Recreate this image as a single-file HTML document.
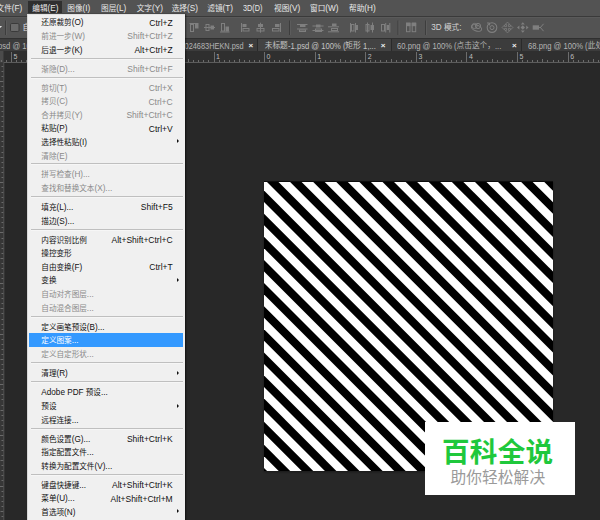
<!DOCTYPE html><html lang="zh-CN"><head><meta charset="utf-8"><title>Photoshop</title><style>
html,body{margin:0;padding:0}
body{width:600px;height:520px;overflow:hidden;background:#282828;position:relative;font-family:"Liberation Sans","Noto Sans CJK SC",sans-serif;}
div,span{position:absolute;white-space:nowrap;box-sizing:border-box}
svg{position:absolute;overflow:visible}
.l,#menubar span.l{position:static;font-size:8.2px}
#menubar{left:0;top:0;width:600px;height:16px;background:#535353}
#menubar span{top:1.8px;height:13px;line-height:13px;font-size:7.65px;color:#e8e8e8}
#mbline{left:0;top:16px;width:600px;height:2px;background:#5a5a5a;border-top:1px solid #3a3a3a}
#optbar{left:0;top:18px;width:600px;height:20px;background:#535353}
#tabbar{left:0;top:38px;width:600px;height:13px;background:#3c3c3c;border-top:1px solid #303030}
#tabbar span{top:1px;height:12px;line-height:12px;font-size:7.9px;color:#b4b4b4}
#tabbar i{position:absolute;top:0;width:1px;height:12px;background:#2a2a2a}
#tabbar b{position:absolute;top:1px;height:12px;line-height:12px;font-size:8px;color:#f0f0f0;font-weight:bold}
#ruler{left:0;top:51px;width:600px;height:12px;background:#2f2f2f}
#vruler{left:0;top:63px;width:4px;height:457px;background:#373737}
#menu{left:27px;top:13.6px;width:158px;height:512px;background:#f0f0f0;border-left:1px solid #d8d8d8;border-top:1px solid #e2e2e2;box-shadow:1px 0 1.5px rgba(0,0,0,.55)}
.mi{left:1px;width:154px;height:13.6px;line-height:13.6px;font-size:7.6px;color:#101010}
.mi .t{left:12.3px;top:0.85px}
.mi .k{right:10.3px;top:1.3px;font-size:8.5px}
.mi.d{color:#8a8a8a}
.mi.h{background:#3399ff;color:#fff}
.mi .ar{right:3.6px;top:4.4px;width:0;height:0;border-left:2.8px solid #111;border-top:2.4px solid transparent;border-bottom:2.4px solid transparent}
.sep{left:2.5px;width:152.5px;height:1px;background:#bfbfbf;box-shadow:0 1px 0 #f6f6f6}
#wm{left:425px;top:422px;width:150px;height:73px;background:#fff}
#wm .a{left:-2.3px;width:150px;text-align:center;top:14.8px;font-size:27.6px;line-height:32px;font-weight:bold;color:#1fc83c;letter-spacing:0.3px}
#wm .b{left:-2.2px;width:150px;text-align:center;top:46.3px;font-size:15.7px;line-height:20px;color:#9a9a9a;letter-spacing:0.12px}
</style></head><body>
<div id="menubar"><div style="left:27.5px;top:1px;width:34.5px;height:12.3px;background:#2f2f2f"></div><span style="left:-3.5px">文件<span class="l">(F)</span></span><span style="left:32.3px">编辑<span class="l">(E)</span></span><span style="left:67.3px">图像<span class="l">(I)</span></span><span style="left:101px">图层<span class="l">(L)</span></span><span style="left:136.7px">文字<span class="l">(Y)</span></span><span style="left:171.7px">选择<span class="l">(S)</span></span><span style="left:207.3px">滤镜<span class="l">(T)</span></span><span style="left:242.7px;font-size:8.2px;transform:scaleX(0.89);transform-origin:0 50%">3D(D)</span><span style="left:274px">视图<span class="l">(V)</span></span><span style="left:310px">窗口<span class="l">(W)</span></span><span style="left:349px">帮助<span class="l">(H)</span></span></div><div id="mbline"></div>
<div id="optbar"></div><svg style="left:0;top:0" width="600" height="40" viewBox="0 0 600 40" shape-rendering="auto"><path d="M-1 26 L2 26 L0.5 28 Z" fill="#ddd"/><rect x="5" y="20.5" width="1" height="14.5" fill="#3d3d3d"/><rect x="6" y="20.5" width="1" height="14.5" fill="#5c5c5c"/><rect x="10.5" y="23.5" width="8.5" height="8" rx="1.2" fill="#6a6a6a" stroke="#3a3a3a" stroke-width="1"/><rect x="189.5" y="23" width="9.0" height="1" fill="#7f7f7f"/><rect x="190.5" y="24.5" width="3" height="7" fill="none" stroke="#7f7f7f" stroke-width="1"/><rect x="195" y="24" width="3.5" height="4.5" fill="#7f7f7f"/><rect x="204" y="27" width="11" height="1" fill="#7f7f7f"/><rect x="206.0" y="24.5" width="3" height="6" fill="none" stroke="#7f7f7f" stroke-width="1"/><rect x="210.5" y="25.5" width="3.5" height="4" fill="#7f7f7f"/><rect x="220" y="31.5" width="9.5" height="1" fill="#7f7f7f"/><rect x="221.5" y="23.5" width="3" height="7.5" fill="none" stroke="#7f7f7f" stroke-width="1"/><rect x="225.5" y="26.5" width="3.5" height="5" fill="#7f7f7f"/><rect x="241" y="23" width="1" height="9" fill="#7f7f7f"/><rect x="242.5" y="24" width="4" height="3" fill="#7f7f7f"/><rect x="243.0" y="28.5" width="6" height="2.5" fill="none" stroke="#7f7f7f" stroke-width="1"/><rect x="260" y="22.7" width="1" height="10.000000000000004" fill="#7f7f7f"/><rect x="258" y="24" width="5" height="3" fill="#7f7f7f"/><rect x="257.0" y="28.5" width="7" height="2.5" fill="none" stroke="#7f7f7f" stroke-width="1"/><rect x="280" y="23" width="1" height="9" fill="#7f7f7f"/><rect x="275" y="24" width="4.5" height="3" fill="#7f7f7f"/><rect x="272.5" y="28.5" width="6.5" height="2.5" fill="none" stroke="#7f7f7f" stroke-width="1"/><rect x="289" y="20.5" width="1" height="14.5" fill="#3d3d3d"/><rect x="290" y="20.5" width="1" height="14.5" fill="#5c5c5c"/><rect x="297" y="24" width="10.5" height="1" fill="#7f7f7f"/><rect x="300" y="25" width="5.5" height="2" fill="#7f7f7f"/><rect x="297" y="28.5" width="10.5" height="1" fill="#7f7f7f"/><rect x="299.5" y="30.0" width="6" height="1.5" fill="none" stroke="#7f7f7f" stroke-width="1"/><rect x="312.5" y="25.5" width="11.0" height="1" fill="#7f7f7f"/><rect x="316" y="24.5" width="4.5" height="3" fill="#7f7f7f"/><rect x="312.5" y="30" width="11.0" height="1" fill="#7f7f7f"/><rect x="315.5" y="29.0" width="6" height="2.5" fill="none" stroke="#7f7f7f" stroke-width="1"/><rect x="332" y="23.5" width="4.5" height="2.5" fill="#7f7f7f"/><rect x="328" y="26.3" width="11" height="1" fill="#7f7f7f"/><rect x="331.5" y="28.5" width="6" height="2" fill="none" stroke="#7f7f7f" stroke-width="1"/><rect x="328" y="31.3" width="11" height="1" fill="#7f7f7f"/><rect x="350" y="23" width="1" height="9.5" fill="#7f7f7f"/><rect x="351.5" y="24.5" width="2.5" height="6.5" fill="none" stroke="#7f7f7f" stroke-width="1"/><rect x="355" y="23" width="1" height="9.5" fill="#7f7f7f"/><rect x="356" y="25" width="2" height="5" fill="#7f7f7f"/><rect x="367" y="22.5" width="1" height="10.0" fill="#7f7f7f"/><rect x="366.0" y="24.5" width="3" height="6.5" fill="none" stroke="#7f7f7f" stroke-width="1"/><rect x="372" y="22.5" width="1" height="10.0" fill="#7f7f7f"/><rect x="370.5" y="25" width="3.5" height="5" fill="#7f7f7f"/><rect x="381.5" y="24.5" width="3" height="6.5" fill="none" stroke="#7f7f7f" stroke-width="1"/><rect x="385.2" y="23" width="1" height="9.5" fill="#7f7f7f"/><rect x="386.7" y="25" width="2.3" height="5" fill="#7f7f7f"/><rect x="389.3" y="23" width="1" height="9.5" fill="#7f7f7f"/><rect x="397.5" y="20.5" width="1" height="14.5" fill="#3d3d3d"/><rect x="398.5" y="20.5" width="1" height="14.5" fill="#5c5c5c"/><rect x="406.5" y="23.2" width="3.5" height="8.5" fill="none" stroke="#7f7f7f" stroke-width="1"/><rect x="406" y="22.7" width="4.5" height="3.5" fill="#7f7f7f"/><rect x="412.2" y="23.2" width="3.5" height="8.5" fill="none" stroke="#7f7f7f" stroke-width="1"/><rect x="411.7" y="22.7" width="4.5" height="3.5" fill="#7f7f7f"/><rect x="425" y="20.5" width="1" height="14.5" fill="#3d3d3d"/><rect x="426" y="20.5" width="1" height="14.5" fill="#5c5c5c"/><circle cx="478" cy="26" r="2.6" fill="none" stroke="#7f7f7f" stroke-width="1"/><ellipse cx="476.5" cy="28" rx="5.3" ry="3" fill="none" stroke="#7f7f7f" stroke-width="1" transform="rotate(20 476.5 28)"/><circle cx="474.5" cy="26" r="2.6" fill="none" stroke="#7f7f7f" stroke-width="0.9"/><circle cx="492" cy="27.6" r="4.8" fill="none" stroke="#7f7f7f" stroke-width="1.1"/><circle cx="492" cy="27.6" r="2" fill="none" stroke="#7f7f7f" stroke-width="1"/><path d="M487 23 l2.6 0 l0 2.4" fill="none" stroke="#7f7f7f" stroke-width="1"/><polygon points="507.50,22.10 510.00,24.60 508.40,24.60 508.40,26.60 510.40,26.60 510.40,25.00 512.90,27.50 510.40,30.00 510.40,28.40 508.40,28.40 508.40,30.40 510.00,30.40 507.50,32.90 505.00,30.40 506.60,30.40 506.60,28.40 504.60,28.40 504.60,30.00 502.10,27.50 504.60,25.00 504.60,26.60 506.60,26.60 506.60,24.60 505.00,24.60" fill="none" stroke="#7f7f7f" stroke-width="0.8"/><path d="M522.8 25.3 l2.2 2.2 l-2.2 2.2 l-2.2 -2.2 z" fill="#7f7f7f"/><path d="M522.8 22.2 l2 2.3 h-4 z M522.8 32.8 l2 -2.3 h-4 z M517.0 27.5 l2.4 -2 v4 z M528.5999999999999 27.5 l-2.4 -2 v4 z" fill="#7f7f7f"/><rect x="532.7" y="25.3" width="6.3" height="4.4" fill="#7f7f7f"/><path d="M543.6 23.8 L540.4 27.5 L543.6 31.2" fill="none" stroke="#7f7f7f" stroke-width="1"/><path d="M539 27.5 h2" stroke="#7f7f7f" stroke-width="1"/></svg><span style="left:22.6px;top:21.5px;height:12px;line-height:12px;font-size:7.65px;color:#e0e0e0">自动选择<span class="l">:</span></span><span style="left:431.3px;top:21.5px;height:12px;line-height:12px;font-size:7.65px;color:#d4d4d4"><span class="l">3D</span> 模式<span class="l">:</span></span>
<div id="tabbar"><span style="left:-1.80px;top:1.0px;height:12px;line-height:12px;font-size:8.7px;color:#b4b4b4;white-space:pre;transform:scaleX(0.88);transform-origin:0 50%">psd @ 100% (</span><span style="left:46.83px;top:1px;height:12px;line-height:12px;font-size:7.7px;color:#b4b4b4;white-space:pre">图层</span><span style="left:62.23px;top:1.0px;height:12px;line-height:12px;font-size:8.7px;color:#b4b4b4;white-space:pre;transform:scaleX(0.88);transform-origin:0 50%"> 1, RGB/8)</span><span style="left:164.44px;top:1.0px;height:12px;line-height:12px;font-size:8.7px;color:#b4b4b4;white-space:pre;transform:scaleX(0.85);transform-origin:0 50%">20160024683HEKN.psd</span><b style="left:248.6px">×</b><i style="left:257px"></i><div style="left:258px;top:0;width:133px;height:12px;background:#434343"></div><span style="left:264.70px;top:1px;height:12px;line-height:12px;font-size:7.7px;color:#c4c4c4;white-space:pre">未标题</span><span style="left:287.80px;top:1.0px;height:12px;line-height:12px;font-size:8.7px;color:#c4c4c4;white-space:pre;transform:scaleX(0.88);transform-origin:0 50%">-1.psd @ 100% (</span><span style="left:345.36px;top:1px;height:12px;line-height:12px;font-size:7.7px;color:#c4c4c4;white-space:pre">矩形</span><span style="left:360.76px;top:1.0px;height:12px;line-height:12px;font-size:8.7px;color:#c4c4c4;white-space:pre;transform:scaleX(0.88);transform-origin:0 50%"> 1,...</span><b style="left:380.8px">×</b><i style="left:391px"></i><span style="left:396.80px;top:1.0px;height:12px;line-height:12px;font-size:8.7px;color:#b4b4b4;white-space:pre;transform:scaleX(0.88);transform-origin:0 50%">60.png @ 100% (</span><span style="left:456.50px;top:1px;height:12px;line-height:12px;font-size:7.7px;color:#b4b4b4;white-space:pre">点击这个，</span><span style="left:495.00px;top:1.0px;height:12px;line-height:12px;font-size:8.7px;color:#b4b4b4;white-space:pre;transform:scaleX(0.88);transform-origin:0 50%">...</span><b style="left:512px">×</b><i style="left:521px"></i><span style="left:528.00px;top:1.0px;height:12px;line-height:12px;font-size:8.7px;color:#b4b4b4;white-space:pre;transform:scaleX(0.88);transform-origin:0 50%">68.png @ 100% (</span><span style="left:587.70px;top:1px;height:12px;line-height:12px;font-size:7.7px;color:#b4b4b4;white-space:pre">此处添加文字</span><span style="left:633.90px;top:1.0px;height:12px;line-height:12px;font-size:8.7px;color:#b4b4b4;white-space:pre;transform:scaleX(0.88);transform-origin:0 50%">)</span></div>
<div id="ruler"></div><div id="vruler"></div><svg style="left:0;top:0" width="600" height="520" viewBox="0 0 600 520"><rect x="0" y="51" width="3.5" height="11.5" fill="#4b4b4b"/><rect x="-40" y="52" width="1" height="11" fill="#6c6c6c"/><text x="-37.00" y="59.2" font-size="7" fill="#bdbdbd" font-family='"Liberation Sans",sans-serif'>6</text><rect x="-34" y="60" width="1" height="2" fill="#6c6c6c"/><rect x="-29" y="60" width="1" height="2" fill="#6c6c6c"/><rect x="-24" y="60" width="1" height="2" fill="#6c6c6c"/><rect x="-19" y="60" width="1" height="2" fill="#6c6c6c"/><rect x="-14" y="59" width="1" height="3" fill="#6c6c6c"/><rect x="-9" y="60" width="1" height="2" fill="#6c6c6c"/><rect x="-4" y="60" width="1" height="2" fill="#6c6c6c"/><rect x="1" y="60" width="1" height="2" fill="#6c6c6c"/><rect x="6" y="60" width="1" height="2" fill="#6c6c6c"/><rect x="11" y="52" width="1" height="11" fill="#6c6c6c"/><text x="13.60" y="59.2" font-size="7" fill="#bdbdbd" font-family='"Liberation Sans",sans-serif'>5</text><rect x="16" y="60" width="1" height="2" fill="#6c6c6c"/><rect x="21" y="60" width="1" height="2" fill="#6c6c6c"/><rect x="26" y="60" width="1" height="2" fill="#6c6c6c"/><rect x="31" y="60" width="1" height="2" fill="#6c6c6c"/><rect x="36" y="59" width="1" height="3" fill="#6c6c6c"/><rect x="41" y="60" width="1" height="2" fill="#6c6c6c"/><rect x="47" y="60" width="1" height="2" fill="#6c6c6c"/><rect x="52" y="60" width="1" height="2" fill="#6c6c6c"/><rect x="57" y="60" width="1" height="2" fill="#6c6c6c"/><rect x="62" y="52" width="1" height="11" fill="#6c6c6c"/><text x="64.20" y="59.2" font-size="7" fill="#bdbdbd" font-family='"Liberation Sans",sans-serif'>4</text><rect x="67" y="60" width="1" height="2" fill="#6c6c6c"/><rect x="72" y="60" width="1" height="2" fill="#6c6c6c"/><rect x="77" y="60" width="1" height="2" fill="#6c6c6c"/><rect x="82" y="60" width="1" height="2" fill="#6c6c6c"/><rect x="87" y="59" width="1" height="3" fill="#6c6c6c"/><rect x="92" y="60" width="1" height="2" fill="#6c6c6c"/><rect x="97" y="60" width="1" height="2" fill="#6c6c6c"/><rect x="102" y="60" width="1" height="2" fill="#6c6c6c"/><rect x="107" y="60" width="1" height="2" fill="#6c6c6c"/><rect x="112" y="52" width="1" height="11" fill="#6c6c6c"/><text x="114.80" y="59.2" font-size="7" fill="#bdbdbd" font-family='"Liberation Sans",sans-serif'>3</text><rect x="117" y="60" width="1" height="2" fill="#6c6c6c"/><rect x="122" y="60" width="1" height="2" fill="#6c6c6c"/><rect x="127" y="60" width="1" height="2" fill="#6c6c6c"/><rect x="133" y="60" width="1" height="2" fill="#6c6c6c"/><rect x="138" y="59" width="1" height="3" fill="#6c6c6c"/><rect x="143" y="60" width="1" height="2" fill="#6c6c6c"/><rect x="148" y="60" width="1" height="2" fill="#6c6c6c"/><rect x="153" y="60" width="1" height="2" fill="#6c6c6c"/><rect x="158" y="60" width="1" height="2" fill="#6c6c6c"/><rect x="163" y="52" width="1" height="11" fill="#6c6c6c"/><text x="165.40" y="59.2" font-size="7" fill="#bdbdbd" font-family='"Liberation Sans",sans-serif'>2</text><rect x="168" y="60" width="1" height="2" fill="#6c6c6c"/><rect x="173" y="60" width="1" height="2" fill="#6c6c6c"/><rect x="178" y="60" width="1" height="2" fill="#6c6c6c"/><rect x="183" y="60" width="1" height="2" fill="#6c6c6c"/><rect x="188" y="59" width="1" height="3" fill="#6c6c6c"/><rect x="193" y="60" width="1" height="2" fill="#6c6c6c"/><rect x="198" y="60" width="1" height="2" fill="#6c6c6c"/><rect x="203" y="60" width="1" height="2" fill="#6c6c6c"/><rect x="208" y="60" width="1" height="2" fill="#6c6c6c"/><rect x="214" y="52" width="1" height="11" fill="#6c6c6c"/><text x="216.00" y="59.2" font-size="7" fill="#bdbdbd" font-family='"Liberation Sans",sans-serif'>1</text><rect x="219" y="60" width="1" height="2" fill="#6c6c6c"/><rect x="224" y="60" width="1" height="2" fill="#6c6c6c"/><rect x="229" y="60" width="1" height="2" fill="#6c6c6c"/><rect x="234" y="60" width="1" height="2" fill="#6c6c6c"/><rect x="239" y="59" width="1" height="3" fill="#6c6c6c"/><rect x="244" y="60" width="1" height="2" fill="#6c6c6c"/><rect x="249" y="60" width="1" height="2" fill="#6c6c6c"/><rect x="254" y="60" width="1" height="2" fill="#6c6c6c"/><rect x="259" y="60" width="1" height="2" fill="#6c6c6c"/><rect x="264" y="52" width="1" height="11" fill="#6c6c6c"/><text x="266.60" y="59.2" font-size="7" fill="#bdbdbd" font-family='"Liberation Sans",sans-serif'>0</text><rect x="269" y="60" width="1" height="2" fill="#6c6c6c"/><rect x="274" y="60" width="1" height="2" fill="#6c6c6c"/><rect x="279" y="60" width="1" height="2" fill="#6c6c6c"/><rect x="284" y="60" width="1" height="2" fill="#6c6c6c"/><rect x="289" y="59" width="1" height="3" fill="#6c6c6c"/><rect x="294" y="60" width="1" height="2" fill="#6c6c6c"/><rect x="300" y="60" width="1" height="2" fill="#6c6c6c"/><rect x="305" y="60" width="1" height="2" fill="#6c6c6c"/><rect x="310" y="60" width="1" height="2" fill="#6c6c6c"/><rect x="315" y="52" width="1" height="11" fill="#6c6c6c"/><text x="317.20" y="59.2" font-size="7" fill="#bdbdbd" font-family='"Liberation Sans",sans-serif'>1</text><rect x="320" y="60" width="1" height="2" fill="#6c6c6c"/><rect x="325" y="60" width="1" height="2" fill="#6c6c6c"/><rect x="330" y="60" width="1" height="2" fill="#6c6c6c"/><rect x="335" y="60" width="1" height="2" fill="#6c6c6c"/><rect x="340" y="59" width="1" height="3" fill="#6c6c6c"/><rect x="345" y="60" width="1" height="2" fill="#6c6c6c"/><rect x="350" y="60" width="1" height="2" fill="#6c6c6c"/><rect x="355" y="60" width="1" height="2" fill="#6c6c6c"/><rect x="360" y="60" width="1" height="2" fill="#6c6c6c"/><rect x="365" y="52" width="1" height="11" fill="#6c6c6c"/><text x="367.80" y="59.2" font-size="7" fill="#bdbdbd" font-family='"Liberation Sans",sans-serif'>2</text><rect x="370" y="60" width="1" height="2" fill="#6c6c6c"/><rect x="375" y="60" width="1" height="2" fill="#6c6c6c"/><rect x="380" y="60" width="1" height="2" fill="#6c6c6c"/><rect x="386" y="60" width="1" height="2" fill="#6c6c6c"/><rect x="391" y="59" width="1" height="3" fill="#6c6c6c"/><rect x="396" y="60" width="1" height="2" fill="#6c6c6c"/><rect x="401" y="60" width="1" height="2" fill="#6c6c6c"/><rect x="406" y="60" width="1" height="2" fill="#6c6c6c"/><rect x="411" y="60" width="1" height="2" fill="#6c6c6c"/><rect x="416" y="52" width="1" height="11" fill="#6c6c6c"/><text x="418.40" y="59.2" font-size="7" fill="#bdbdbd" font-family='"Liberation Sans",sans-serif'>3</text><rect x="421" y="60" width="1" height="2" fill="#6c6c6c"/><rect x="426" y="60" width="1" height="2" fill="#6c6c6c"/><rect x="431" y="60" width="1" height="2" fill="#6c6c6c"/><rect x="436" y="60" width="1" height="2" fill="#6c6c6c"/><rect x="441" y="59" width="1" height="3" fill="#6c6c6c"/><rect x="446" y="60" width="1" height="2" fill="#6c6c6c"/><rect x="451" y="60" width="1" height="2" fill="#6c6c6c"/><rect x="456" y="60" width="1" height="2" fill="#6c6c6c"/><rect x="461" y="60" width="1" height="2" fill="#6c6c6c"/><rect x="466" y="52" width="1" height="11" fill="#6c6c6c"/><text x="469.00" y="59.2" font-size="7" fill="#bdbdbd" font-family='"Liberation Sans",sans-serif'>4</text><rect x="472" y="60" width="1" height="2" fill="#6c6c6c"/><rect x="477" y="60" width="1" height="2" fill="#6c6c6c"/><rect x="482" y="60" width="1" height="2" fill="#6c6c6c"/><rect x="487" y="60" width="1" height="2" fill="#6c6c6c"/><rect x="492" y="59" width="1" height="3" fill="#6c6c6c"/><rect x="497" y="60" width="1" height="2" fill="#6c6c6c"/><rect x="502" y="60" width="1" height="2" fill="#6c6c6c"/><rect x="507" y="60" width="1" height="2" fill="#6c6c6c"/><rect x="512" y="60" width="1" height="2" fill="#6c6c6c"/><rect x="517" y="52" width="1" height="11" fill="#6c6c6c"/><text x="519.60" y="59.2" font-size="7" fill="#bdbdbd" font-family='"Liberation Sans",sans-serif'>5</text><rect x="522" y="60" width="1" height="2" fill="#6c6c6c"/><rect x="527" y="60" width="1" height="2" fill="#6c6c6c"/><rect x="532" y="60" width="1" height="2" fill="#6c6c6c"/><rect x="537" y="60" width="1" height="2" fill="#6c6c6c"/><rect x="542" y="59" width="1" height="3" fill="#6c6c6c"/><rect x="547" y="60" width="1" height="2" fill="#6c6c6c"/><rect x="553" y="60" width="1" height="2" fill="#6c6c6c"/><rect x="558" y="60" width="1" height="2" fill="#6c6c6c"/><rect x="563" y="60" width="1" height="2" fill="#6c6c6c"/><rect x="568" y="52" width="1" height="11" fill="#6c6c6c"/><text x="570.20" y="59.2" font-size="7" fill="#bdbdbd" font-family='"Liberation Sans",sans-serif'>6</text><rect x="573" y="60" width="1" height="2" fill="#6c6c6c"/><rect x="578" y="60" width="1" height="2" fill="#6c6c6c"/><rect x="583" y="60" width="1" height="2" fill="#6c6c6c"/><rect x="588" y="60" width="1" height="2" fill="#6c6c6c"/><rect x="593" y="59" width="1" height="3" fill="#6c6c6c"/><rect x="598" y="60" width="1" height="2" fill="#6c6c6c"/><rect x="603" y="60" width="1" height="2" fill="#6c6c6c"/><rect x="608" y="60" width="1" height="2" fill="#6c6c6c"/><rect x="613" y="60" width="1" height="2" fill="#6c6c6c"/><rect x="618" y="52" width="1" height="11" fill="#6c6c6c"/><text x="620.80" y="59.2" font-size="7" fill="#bdbdbd" font-family='"Liberation Sans",sans-serif'>7</text><rect x="623" y="60" width="1" height="2" fill="#6c6c6c"/><rect x="628" y="60" width="1" height="2" fill="#6c6c6c"/><rect x="633" y="60" width="1" height="2" fill="#6c6c6c"/><rect x="639" y="60" width="1" height="2" fill="#6c6c6c"/><rect x="644" y="59" width="1" height="3" fill="#6c6c6c"/><rect x="649" y="60" width="1" height="2" fill="#6c6c6c"/><rect x="654" y="60" width="1" height="2" fill="#6c6c6c"/><rect x="659" y="60" width="1" height="2" fill="#6c6c6c"/><rect x="664" y="60" width="1" height="2" fill="#6c6c6c"/><rect x="3.5" y="62" width="596.5" height="1" fill="#5c5c5c"/><rect x="1.5" y="66" width="2" height="1" fill="#6a6a6a"/><rect x="1.5" y="71" width="2" height="1" fill="#6a6a6a"/><rect x="1.5" y="76" width="2" height="1" fill="#6a6a6a"/><rect x="0.0" y="81" width="3.5" height="1" fill="#6a6a6a"/><rect x="1.5" y="86" width="2" height="1" fill="#6a6a6a"/><rect x="1.5" y="91" width="2" height="1" fill="#6a6a6a"/><rect x="1.5" y="96" width="2" height="1" fill="#6a6a6a"/><rect x="1.5" y="101" width="2" height="1" fill="#6a6a6a"/><rect x="0.5" y="106" width="3" height="1" fill="#6a6a6a"/><rect x="1.5" y="111" width="2" height="1" fill="#6a6a6a"/><rect x="1.5" y="116" width="2" height="1" fill="#6a6a6a"/><rect x="1.5" y="121" width="2" height="1" fill="#6a6a6a"/><rect x="1.5" y="126" width="2" height="1" fill="#6a6a6a"/><rect x="0.0" y="131" width="3.5" height="1" fill="#6a6a6a"/><rect x="1.5" y="136" width="2" height="1" fill="#6a6a6a"/><rect x="1.5" y="141" width="2" height="1" fill="#6a6a6a"/><rect x="1.5" y="146" width="2" height="1" fill="#6a6a6a"/><rect x="1.5" y="152" width="2" height="1" fill="#6a6a6a"/><rect x="0.5" y="157" width="3" height="1" fill="#6a6a6a"/><rect x="1.5" y="162" width="2" height="1" fill="#6a6a6a"/><rect x="1.5" y="167" width="2" height="1" fill="#6a6a6a"/><rect x="1.5" y="172" width="2" height="1" fill="#6a6a6a"/><rect x="1.5" y="177" width="2" height="1" fill="#6a6a6a"/><rect x="0.0" y="182" width="3.5" height="1" fill="#6a6a6a"/><rect x="1.5" y="187" width="2" height="1" fill="#6a6a6a"/><rect x="1.5" y="192" width="2" height="1" fill="#6a6a6a"/><rect x="1.5" y="197" width="2" height="1" fill="#6a6a6a"/><rect x="1.5" y="202" width="2" height="1" fill="#6a6a6a"/><rect x="0.5" y="207" width="3" height="1" fill="#6a6a6a"/><rect x="1.5" y="212" width="2" height="1" fill="#6a6a6a"/><rect x="1.5" y="217" width="2" height="1" fill="#6a6a6a"/><rect x="1.5" y="222" width="2" height="1" fill="#6a6a6a"/><rect x="1.5" y="227" width="2" height="1" fill="#6a6a6a"/><rect x="0.0" y="232" width="3.5" height="1" fill="#6a6a6a"/><rect x="1.5" y="238" width="2" height="1" fill="#6a6a6a"/><rect x="1.5" y="243" width="2" height="1" fill="#6a6a6a"/><rect x="1.5" y="248" width="2" height="1" fill="#6a6a6a"/><rect x="1.5" y="253" width="2" height="1" fill="#6a6a6a"/><rect x="0.5" y="258" width="3" height="1" fill="#6a6a6a"/><rect x="1.5" y="263" width="2" height="1" fill="#6a6a6a"/><rect x="1.5" y="268" width="2" height="1" fill="#6a6a6a"/><rect x="1.5" y="273" width="2" height="1" fill="#6a6a6a"/><rect x="1.5" y="278" width="2" height="1" fill="#6a6a6a"/><rect x="0.0" y="283" width="3.5" height="1" fill="#6a6a6a"/><rect x="1.5" y="288" width="2" height="1" fill="#6a6a6a"/><rect x="1.5" y="293" width="2" height="1" fill="#6a6a6a"/><rect x="1.5" y="298" width="2" height="1" fill="#6a6a6a"/><rect x="1.5" y="303" width="2" height="1" fill="#6a6a6a"/><rect x="0.5" y="308" width="3" height="1" fill="#6a6a6a"/><rect x="1.5" y="313" width="2" height="1" fill="#6a6a6a"/><rect x="1.5" y="319" width="2" height="1" fill="#6a6a6a"/><rect x="1.5" y="324" width="2" height="1" fill="#6a6a6a"/><rect x="1.5" y="329" width="2" height="1" fill="#6a6a6a"/><rect x="0.0" y="334" width="3.5" height="1" fill="#6a6a6a"/><rect x="1.5" y="339" width="2" height="1" fill="#6a6a6a"/><rect x="1.5" y="344" width="2" height="1" fill="#6a6a6a"/><rect x="1.5" y="349" width="2" height="1" fill="#6a6a6a"/><rect x="1.5" y="354" width="2" height="1" fill="#6a6a6a"/><rect x="0.5" y="359" width="3" height="1" fill="#6a6a6a"/><rect x="1.5" y="364" width="2" height="1" fill="#6a6a6a"/><rect x="1.5" y="369" width="2" height="1" fill="#6a6a6a"/><rect x="1.5" y="374" width="2" height="1" fill="#6a6a6a"/><rect x="1.5" y="379" width="2" height="1" fill="#6a6a6a"/><rect x="0.0" y="384" width="3.5" height="1" fill="#6a6a6a"/><rect x="1.5" y="389" width="2" height="1" fill="#6a6a6a"/><rect x="1.5" y="394" width="2" height="1" fill="#6a6a6a"/><rect x="1.5" y="399" width="2" height="1" fill="#6a6a6a"/><rect x="1.5" y="405" width="2" height="1" fill="#6a6a6a"/><rect x="0.5" y="410" width="3" height="1" fill="#6a6a6a"/><rect x="1.5" y="415" width="2" height="1" fill="#6a6a6a"/><rect x="1.5" y="420" width="2" height="1" fill="#6a6a6a"/><rect x="1.5" y="425" width="2" height="1" fill="#6a6a6a"/><rect x="1.5" y="430" width="2" height="1" fill="#6a6a6a"/><rect x="0.0" y="435" width="3.5" height="1" fill="#6a6a6a"/><rect x="1.5" y="440" width="2" height="1" fill="#6a6a6a"/><rect x="1.5" y="445" width="2" height="1" fill="#6a6a6a"/><rect x="1.5" y="450" width="2" height="1" fill="#6a6a6a"/><rect x="1.5" y="455" width="2" height="1" fill="#6a6a6a"/><rect x="0.5" y="460" width="3" height="1" fill="#6a6a6a"/><rect x="1.5" y="465" width="2" height="1" fill="#6a6a6a"/><rect x="1.5" y="470" width="2" height="1" fill="#6a6a6a"/><rect x="1.5" y="475" width="2" height="1" fill="#6a6a6a"/><rect x="1.5" y="480" width="2" height="1" fill="#6a6a6a"/><rect x="0.0" y="486" width="3.5" height="1" fill="#6a6a6a"/><rect x="1.5" y="491" width="2" height="1" fill="#6a6a6a"/><rect x="1.5" y="496" width="2" height="1" fill="#6a6a6a"/><rect x="1.5" y="501" width="2" height="1" fill="#6a6a6a"/><rect x="1.5" y="506" width="2" height="1" fill="#6a6a6a"/><rect x="0.5" y="511" width="3" height="1" fill="#6a6a6a"/><rect x="1.5" y="516" width="2" height="1" fill="#6a6a6a"/><rect x="3.4" y="63" width="0.9" height="457" fill="#565656"/></svg>
<svg style="left:264px;top:181px;box-shadow:0 1px 2px rgba(0,0,0,.4);overflow:hidden" width="289" height="290" viewBox="0 -1 289 290"><rect x="0" y="-1" width="289" height="290" fill="#fff"/><g stroke="#000" stroke-width="8.13"><line x1="-634.79" y1="-320" x2="5.21" y2="320"/><line x1="-611.68" y1="-320" x2="28.32" y2="320"/><line x1="-588.57" y1="-320" x2="51.43" y2="320"/><line x1="-565.46" y1="-320" x2="74.54" y2="320"/><line x1="-542.35" y1="-320" x2="97.65" y2="320"/><line x1="-519.24" y1="-320" x2="120.76" y2="320"/><line x1="-496.13" y1="-320" x2="143.87" y2="320"/><line x1="-473.02" y1="-320" x2="166.98" y2="320"/><line x1="-449.91" y1="-320" x2="190.09" y2="320"/><line x1="-426.80" y1="-320" x2="213.20" y2="320"/><line x1="-403.69" y1="-320" x2="236.31" y2="320"/><line x1="-380.58" y1="-320" x2="259.42" y2="320"/><line x1="-357.47" y1="-320" x2="282.53" y2="320"/><line x1="-334.36" y1="-320" x2="305.64" y2="320"/><line x1="-311.25" y1="-320" x2="328.75" y2="320"/><line x1="-288.14" y1="-320" x2="351.86" y2="320"/><line x1="-265.03" y1="-320" x2="374.97" y2="320"/><line x1="-241.92" y1="-320" x2="398.08" y2="320"/><line x1="-218.81" y1="-320" x2="421.19" y2="320"/><line x1="-195.70" y1="-320" x2="444.30" y2="320"/><line x1="-172.59" y1="-320" x2="467.41" y2="320"/><line x1="-149.48" y1="-320" x2="490.52" y2="320"/><line x1="-126.37" y1="-320" x2="513.63" y2="320"/><line x1="-103.26" y1="-320" x2="536.74" y2="320"/><line x1="-80.15" y1="-320" x2="559.85" y2="320"/><line x1="-57.04" y1="-320" x2="582.96" y2="320"/><line x1="-33.93" y1="-320" x2="606.07" y2="320"/><line x1="-10.82" y1="-320" x2="629.18" y2="320"/></g><rect x="0" y="-1" width="289" height="1" fill="#0c0c0c"/></svg>
<div id="wm"><div class="a">百科全说</div><div class="b">助你轻松解决</div></div>
<div id="menu"><div class="mi " style="top:1.00px"><span class="t">还原裁剪<span class="l">(O)</span></span><span class="k">Ctrl+Z</span></div><div class="mi d" style="top:14.60px"><span class="t">前进一步<span class="l">(W)</span></span><span class="k">Shift+Ctrl+Z</span></div><div class="mi " style="top:28.20px"><span class="t">后退一步<span class="l">(K)</span></span><span class="k">Alt+Ctrl+Z</span></div><div class="sep" style="top:43.00px"></div><div class="mi d" style="top:47.15px"><span class="t">渐隐<span class="l">(D)...</span></span><span class="k">Shift+Ctrl+F</span></div><div class="sep" style="top:61.95px"></div><div class="mi d" style="top:66.10px"><span class="t">剪切<span class="l">(T)</span></span><span class="k">Ctrl+X</span></div><div class="mi d" style="top:79.70px"><span class="t">拷贝<span class="l">(C)</span></span><span class="k">Ctrl+C</span></div><div class="mi d" style="top:93.30px"><span class="t">合并拷贝<span class="l">(Y)</span></span><span class="k">Shift+Ctrl+C</span></div><div class="mi " style="top:106.90px"><span class="t">粘贴<span class="l">(P)</span></span><span class="k">Ctrl+V</span></div><div class="mi " style="top:120.50px"><span class="t">选择性粘贴<span class="l">(I)</span></span><span class="ar"></span></div><div class="mi d" style="top:134.10px"><span class="t">清除<span class="l">(E)</span></span></div><div class="sep" style="top:148.90px"></div><div class="mi d" style="top:153.05px"><span class="t">拼写检查<span class="l">(H)...</span></span></div><div class="mi d" style="top:166.65px"><span class="t">查找和替换文本<span class="l">(X)...</span></span></div><div class="sep" style="top:181.45px"></div><div class="mi " style="top:185.60px"><span class="t">填充<span class="l">(L)...</span></span><span class="k">Shift+F5</span></div><div class="mi " style="top:199.20px"><span class="t">描边<span class="l">(S)...</span></span></div><div class="sep" style="top:214.00px"></div><div class="mi " style="top:218.15px"><span class="t">内容识别比例</span><span class="k">Alt+Shift+Ctrl+C</span></div><div class="mi " style="top:231.75px"><span class="t">操控变形</span></div><div class="mi " style="top:245.35px"><span class="t">自由变换<span class="l">(F)</span></span><span class="k">Ctrl+T</span></div><div class="mi " style="top:258.95px"><span class="t">变换</span><span class="ar"></span></div><div class="mi d" style="top:272.55px"><span class="t">自动对齐图层<span class="l">...</span></span></div><div class="mi d" style="top:286.15px"><span class="t">自动混合图层<span class="l">...</span></span></div><div class="sep" style="top:300.95px"></div><div class="mi " style="top:305.10px"><span class="t">定义画笔预设<span class="l">(B)...</span></span></div><div class="mi h" style="top:318.70px"><span class="t">定义图案<span class="l">...</span></span></div><div class="mi d" style="top:332.30px"><span class="t">定义自定形状<span class="l">...</span></span></div><div class="sep" style="top:347.50px"></div><div class="mi " style="top:352.05px"><span class="t">清理<span class="l">(R)</span></span><span class="ar"></span></div><div class="sep" style="top:366.85px"></div><div class="mi " style="top:371.00px"><span class="t"><span class="l">Adobe PDF</span> 预设<span class="l">...</span></span></div><div class="mi " style="top:384.60px"><span class="t">预设</span><span class="ar"></span></div><div class="mi " style="top:398.20px"><span class="t">远程连接<span class="l">...</span></span></div><div class="sep" style="top:413.00px"></div><div class="mi " style="top:417.15px"><span class="t">颜色设置<span class="l">(G)...</span></span><span class="k">Shift+Ctrl+K</span></div><div class="mi " style="top:430.75px"><span class="t">指定配置文件<span class="l">...</span></span></div><div class="mi " style="top:444.35px"><span class="t">转换为配置文件<span class="l">(V)...</span></span></div><div class="sep" style="top:459.15px"></div><div class="mi " style="top:463.30px"><span class="t">键盘快捷键<span class="l">...</span></span><span class="k">Alt+Shift+Ctrl+K</span></div><div class="mi " style="top:476.90px"><span class="t">菜单<span class="l">(U)...</span></span><span class="k">Alt+Shift+Ctrl+M</span></div><div class="mi " style="top:490.50px"><span class="t">首选项<span class="l">(N)</span></span><span class="ar"></span></div></div>
</body></html>
